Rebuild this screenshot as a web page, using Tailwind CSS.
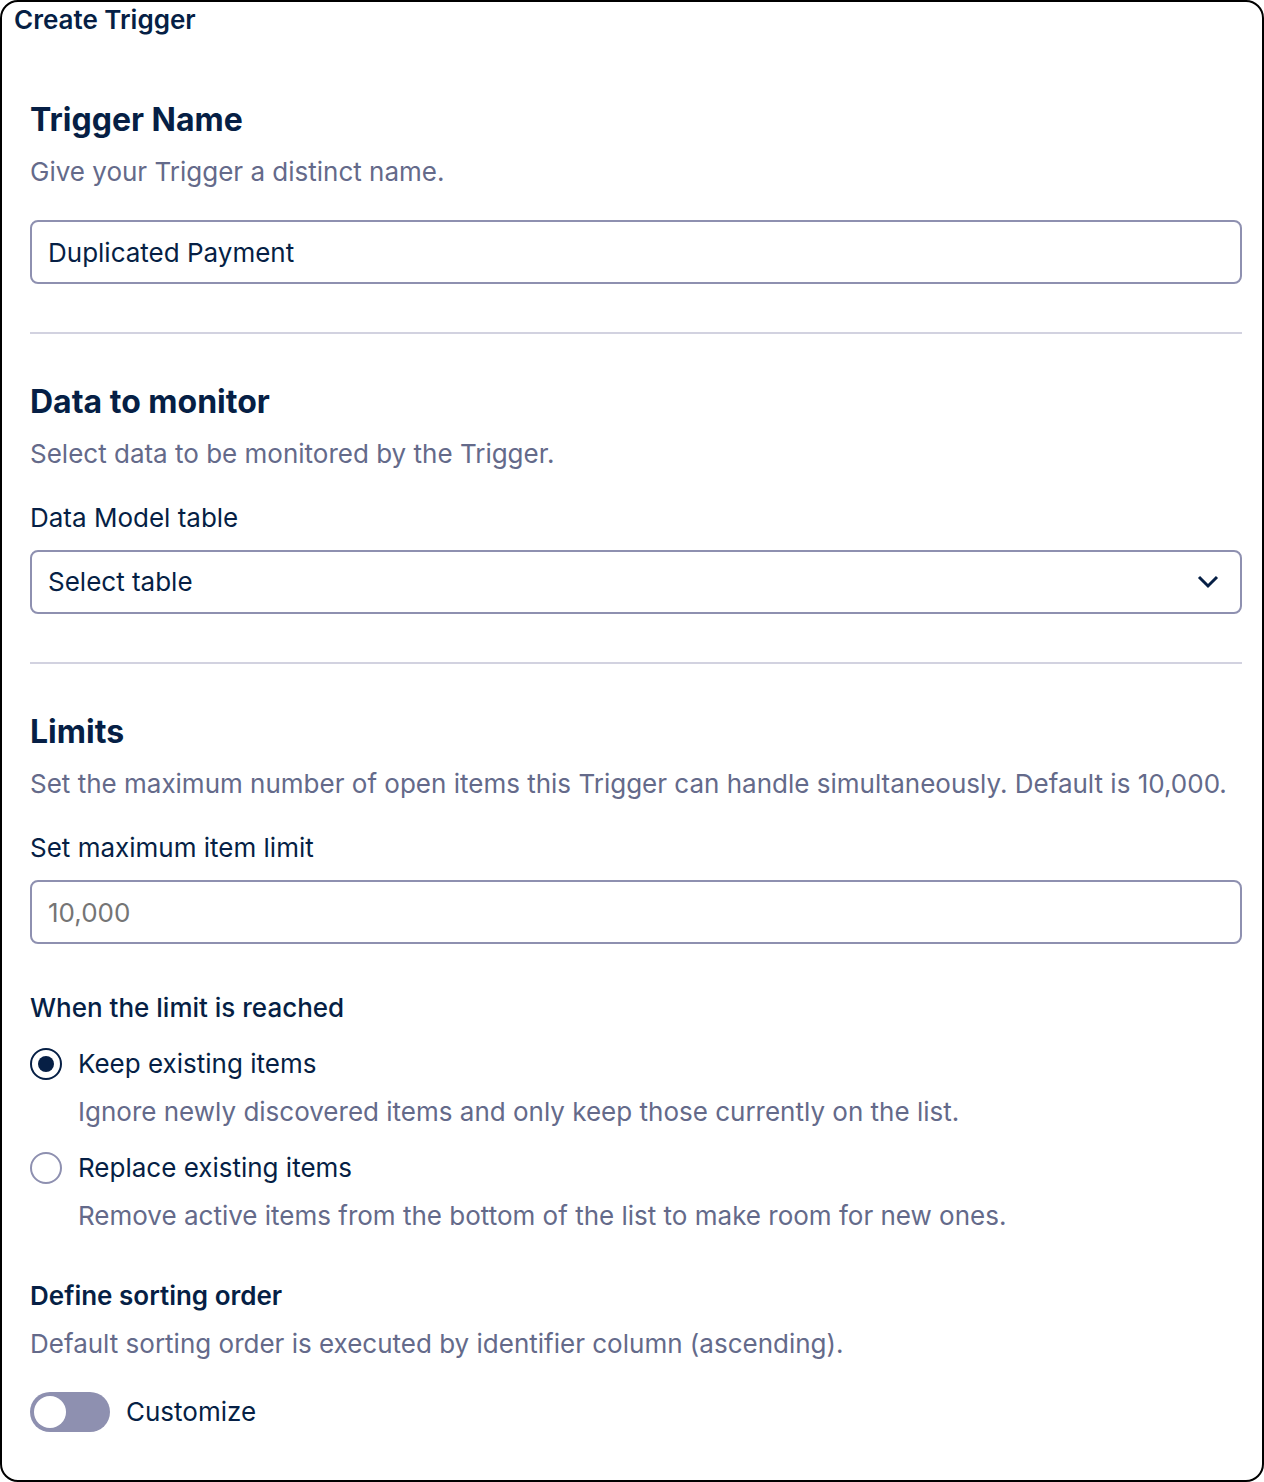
<!DOCTYPE html>
<html lang="en">
<head>
<meta charset="utf-8">
<meta name="viewport" content="width=device-width, initial-scale=1">
<title>Create Trigger</title>
<script src="https://cdn.jsdelivr.net/npm/@tailwindcss/browser@4"></script>
</head>
<body class="bg-white">
<main class="min-h-screen rounded-[18px] border-2 border-black bg-white pb-12 font-['Inter',sans-serif] text-[26px] leading-8 text-[#061f45]">
  <h1 class="px-3 pt-0.5 font-semibold">Create Trigger</h1>
  <form class="pr-5 pl-7">
    <section class="mt-16 border-b-2 border-[#d2d2e0] pb-12">
      <h2 class="text-[32px] leading-10 font-bold"><label for="name">Trigger Name</label></h2>
      <p class="mt-4 text-[#646a8a]">Give your Trigger a distinct name.</p>
      <input id="name" type="text" value="Duplicated Payment" class="mt-8 block h-16 w-full rounded-lg border-2 border-[#8e90b0] px-4">
    </section>
    <section class="mt-12 border-b-2 border-[#d2d2e0] pb-12">
      <h2 class="text-[32px] leading-10 font-bold">Data to monitor</h2>
      <p class="mt-4 text-[#646a8a]">Select data to be monitored by the Trigger.</p>
      <label for="table" class="mt-8 block">Data Model table</label>
      <div class="relative mt-4">
        <select id="table" class="block h-16 w-full appearance-none rounded-lg border-2 border-[#8e90b0] px-4"><option>Select table</option></select>
        <svg class="pointer-events-none absolute top-5 right-5 size-7" viewBox="0 0 28 28" fill="none" stroke="currentColor" stroke-width="3" aria-hidden="true"><path d="M5 7 14 16 23 7"/></svg>
      </div>
    </section>
    <section class="mt-12">
      <h2 class="text-[32px] leading-10 font-bold">Limits</h2>
      <p class="mt-4 text-[#646a8a]">Set the maximum number of open items this Trigger can handle simultaneously. Default is 10,000.</p>
      <label for="limit" class="mt-8 block">Set maximum item limit</label>
      <input id="limit" type="text" placeholder="10,000" class="mt-4 block h-16 w-full rounded-lg border-2 border-[#8e90b0] px-4 placeholder:text-[#757575]">
      <fieldset class="mt-12">
        <legend class="font-medium">When the limit is reached</legend>
        <label class="mt-6 flex items-center gap-4"><input type="radio" name="reached" checked class="size-8 appearance-none rounded-full border-2 border-[#8e90b0] checked:border-[#061f45] checked:bg-[#061f45] checked:bg-clip-content checked:p-1.5">Keep existing items</label>
        <p class="mt-4 pl-12 text-[#646a8a]">Ignore newly discovered items and only keep those currently on the list.</p>
        <label class="mt-6 flex items-center gap-4"><input type="radio" name="reached" class="size-8 appearance-none rounded-full border-2 border-[#8e90b0] checked:border-[#061f45] checked:bg-[#061f45] checked:bg-clip-content checked:p-1.5">Replace existing items</label>
        <p class="mt-4 pl-12 text-[#646a8a]">Remove active items from the bottom of the list to make room for new ones.</p>
      </fieldset>
      <h3 class="mt-12 font-semibold">Define sorting order</h3>
      <p class="mt-4 text-[#646a8a]">Default sorting order is executed by identifier column (ascending).</p>
      <label class="mt-8 flex items-center gap-4"><input type="checkbox" role="switch" class="h-10 w-20 appearance-none rounded-full bg-[#8e90b0] p-1 before:block before:size-8 before:rounded-full before:bg-white checked:bg-[#061f45] checked:before:ml-auto">Customize</label>
    </section>
  </form>
</main>
</body>
</html>
